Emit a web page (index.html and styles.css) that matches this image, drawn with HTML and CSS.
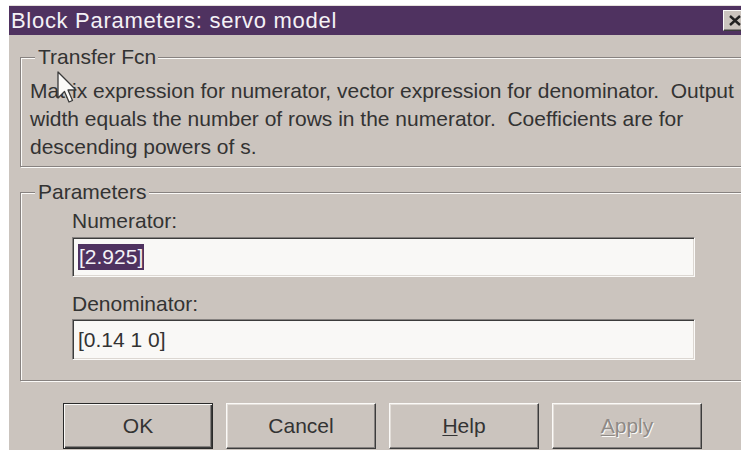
FILE: index.html
```html
<!DOCTYPE html>
<html>
<head>
<meta charset="utf-8">
<title>Block Parameters: servo model</title>
<link rel="stylesheet" href="styles.css">
</head>
<body>
<div class="dialog">
  <div class="titlebar">
    <span class="title">Block Parameters: servo model</span>
    <span class="close">
      <svg width="12" height="11" viewBox="0 0 12 11"><path d="M1 1 L11 10 M11 1 L1 10" stroke="#222" stroke-width="2.4"/></svg>
    </span>
  </div>

  <fieldset class="group group-desc">
    <legend>Transfer Fcn</legend>
    <p class="desc">Matrix expression for numerator, vector expression for denominator.&nbsp; Output<br>width equals the number of rows in the numerator.&nbsp; Coefficients are for<br>descending powers of s.</p>
  </fieldset>

  <fieldset class="group group-params">
    <legend>Parameters</legend>
    <label class="field-label label-num">Numerator:</label>
    <div class="edit edit-num"><span class="sel">[2.925]</span></div>
    <label class="field-label label-den">Denominator:</label>
    <div class="edit edit-den"><span>[0.14 1 0]</span></div>
  </fieldset>

  <div class="buttons">
    <button class="btn btn-default">OK</button>
    <button class="btn">Cancel</button>
    <button class="btn"><u>H</u>elp</button>
    <button class="btn btn-disabled"><u>A</u>pply</button>
  </div>

  <!-- mouse pointer resting over the description text -->
  <svg class="pointer" width="22" height="34" viewBox="0 0 22 34">
    <path d="M1 1 L1 27 L7.5 20.5 L12 31 L15.5 29.5 L11 19 L19 19 Z" fill="#fbfaf8" stroke="#3a3a3a" stroke-width="1.3" stroke-linejoin="round"/>
  </svg>
</div>
</body>
</html>
```
FILE: styles.css
```css
html, body {
  margin: 0;
  padding: 0;
  background: #ffffff;
  overflow: hidden;
  height: 450px;
}

.dialog {
  position: relative;
  margin: 5px 0 0 9px;
  width: 770px;
  height: 460px;
  background: #cbc4be;
  border-top: 1px solid #e6e1dd;
  font-family: "Liberation Sans", Arial, sans-serif;
  font-size: 21px;
  color: #333333;
}

.titlebar {
  height: 29px;
  background: #4f3260;
  display: flex;
  align-items: center;
  justify-content: space-between;
}

.title {
  color: #f4f1f6;
  padding-left: 2px;
  font-size: 22px;
  letter-spacing: 0.7px;
}

.close {
  width: 21px;
  height: 19px;
  margin-right: 33px;
  background: #cbc4be;
  border: 1px solid;
  border-color: #fbfaf8 #3c3c3c #3c3c3c #fbfaf8;
  box-shadow: inset -1px -1px 0 #868280;
  display: flex;
  align-items: center;
  justify-content: center;
}

.group {
  margin: 0 0 0 11px;
  width: 760px;
  border: 1px solid #878280;
  box-shadow: 1px 1px 0 #fbfaf8, inset 1px 1px 0 #fbfaf8;
  padding: 0;
}

.group legend {
  margin-left: 14px;
  padding: 0 2px 0 3px;
  background: #cbc4be;
  line-height: 24px;
}

.group-desc {
  margin-top: 10px;
}

.desc {
  margin: 8px 0 5px 9px;
  line-height: 28px;
  white-space: nowrap;
}

.group-params {
  margin-top: 13px;
  padding-bottom: 20px;
}

.field-label {
  display: block;
  margin-left: 51px;
  line-height: 24px;
}

.label-num {
  margin-top: 5px;
}

.label-den {
  margin-top: 15px;
}

.edit {
  margin-left: 51px;
  width: 616px;
  height: 38px;
  background: #f9f8f6;
  border: 1px solid;
  border-color: #868280 #fbfaf8 #fbfaf8 #868280;
  box-shadow: inset 1px 1px 0 #3c3c3c, inset -1px -1px 0 #dcd7d2;
  display: flex;
  align-items: center;
  padding-left: 5px;
}

.edit-num {
  margin-top: 4px;
}

.edit-den {
  margin-top: 3px;
  height: 39px;
}

.sel {
  background: #4f3260;
  color: #f4f1f6;
  padding: 1px 1px;
}

.buttons {
  display: flex;
  gap: 13px;
  margin: 22px 0 0 54px;
}

.btn {
  width: 150px;
  height: 46px;
  font-family: inherit;
  font-size: 21px;
  color: #333333;
  background: #cbc4be;
  border: 1px solid;
  border-color: #fbfaf8 #3c3c3c #3c3c3c #fbfaf8;
  box-shadow: inset -1px -1px 0 #868280, inset 1px 1px 0 #e3ded9;
  padding: 0;
}

.btn u {
  text-decoration-thickness: 1px;
  text-underline-offset: 2px;
}

.btn-default {
  border: 1px solid #2a2a2a;
  box-shadow: inset 1px 1px 0 #fbfaf8, inset -1px -1px 0 #3c3c3c, inset -2px -2px 0 #868280;
}

.btn-disabled {
  color: #8f8a86;
  text-shadow: 1px 1px 0 #fbfaf8;
}

.pointer {
  position: absolute;
  left: 48px;
  top: 65px;
}
```
